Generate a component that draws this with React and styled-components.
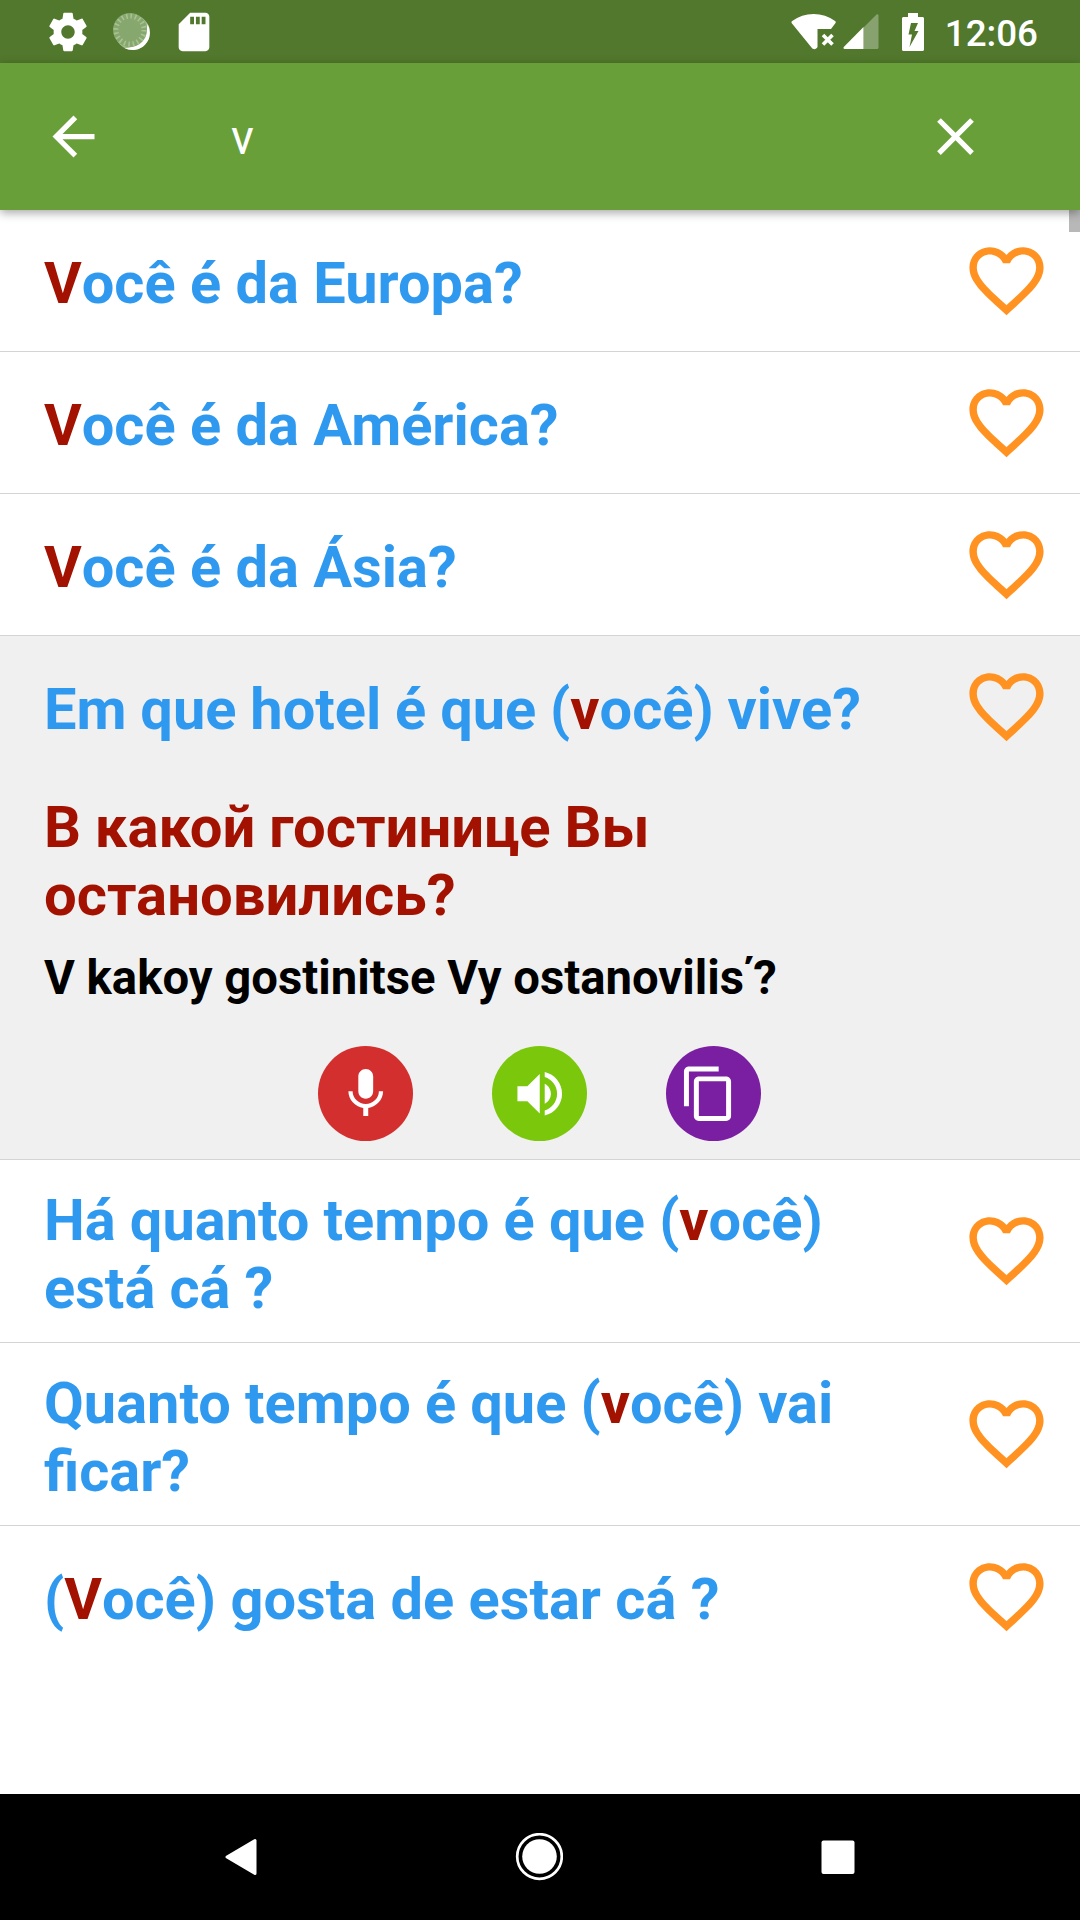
import React from "react";
import styled, { createGlobalStyle } from "styled-components";

const GlobalStyle = createGlobalStyle`
  * { box-sizing: border-box; }
  body { margin: 0; background: #fff; font-family: Roboto, "Noto Sans", sans-serif; }
  svg { display: block; flex: none; }
`;

const Screen = styled.div`
  width: 1080px;
  height: 1920px;
  display: flex;
  flex-direction: column;
  overflow: hidden;
  background: #fff;
`;

const StatusBar = styled.header`
  flex: none;
  height: 63px;
  display: flex;
  align-items: center;
  justify-content: space-between;
  padding: 0 42px 0 45px;
  background: #51782c;
  color: #fff;
`;

const StatusGroup = styled.div`
  display: flex;
  align-items: center;
  gap: ${(p) => p.$gap || 0}px;
`;

const BatteryWrap = styled.div`
  margin-left: 23px;
`;

const Clock = styled.span`
  margin-left: 21px;
  padding-top: 3px;
  font-size: 36.75px;
  line-height: 43px;
  font-weight: 500;
`;

const Toolbar = styled.div`
  flex: none;
  position: relative;
  z-index: 2;
  height: 147px;
  display: flex;
  align-items: center;
  padding: 0 93px 0 42px;
  background: #689f38;
  color: #fff;
  box-shadow: 0 3px 9px rgba(0, 0, 0, 0.34);
`;

const IconButton = styled.button`
  display: flex;
  padding: 0;
  border: 0;
  background: none;
  color: inherit;
`;

const HeartButton = styled(IconButton)`
  color: #ff9220;
`;

const SearchField = styled.div`
  flex: 1;
  padding: 3px 0 0 126px;
  font-size: 47.25px;
  line-height: 55px;
`;

const List = styled.main`
  flex: 1;
  position: relative;
`;

const ScrollThumb = styled.div`
  position: absolute;
  top: 0;
  right: 0;
  width: 11px;
  height: 22px;
  background: #b8b8b8;
`;

const Entry = styled.section`
  background: ${(p) => (p.$open ? "#f0f0f0" : "#fff")};
  border-bottom: ${(p) => (p.$last ? "0" : "1px solid #d4d4d4")};
`;

const EntryHead = styled.div`
  display: flex;
  align-items: center;
  justify-content: space-between;
  min-height: 141px;
  padding: 19.7px 29px 20.3px 44px;
`;

const Phrase = styled.div`
  width: 850px;
  padding-top: 6px;
  font-size: 57.75px;
  line-height: 68px;
  font-weight: 700;
  word-spacing: ${(p) => p.$wordSpacing || 0}px;
  color: #2f99f0;
`;

const Match = styled.span`
  display: inline-block;
  color: #a31200;
`;

const Details = styled.div`
  padding: 16px 44px 18px;
`;

const Translation = styled.div`
  font-size: 58px;
  line-height: 68px;
  font-weight: 700;
  word-spacing: -0.6px;
  color: #a31200;
`;

const Transcription = styled.div`
  margin-top: 22px;
  font-size: 47.25px;
  line-height: 55px;
  font-weight: 700;
  color: #000;
`;

const SoftMark = styled.span`
  margin: 0 -3px 0 -4px;
`;

const Actions = styled.div`
  display: flex;
  justify-content: center;
  gap: 79px;
  margin-top: 40px;
  padding-right: 1px;
`;

const RoundButton = styled.button`
  width: 95px;
  height: 95px;
  display: flex;
  align-items: center;
  justify-content: center;
  border: 0;
  padding: 0 ${(p) => p.$shift || 0}px 0 0;
  border-radius: 50%;
  background: ${(p) => p.$color};
  color: #fff;
`;

const NavBar = styled.nav`
  flex: none;
  height: 126px;
  display: flex;
  align-items: center;
  justify-content: center;
  gap: 250px;
  padding-right: 2px;
  background: #000;
  color: #fff;
`;

const Icon = ({ size, d }) => (
  <svg width={size} height={size} viewBox="0 0 24 24" fill="currentColor">
    <path d={d} />
  </svg>
);

const icons = {
  settings:
    "M19.43 12.98c.04-.32.07-.64.07-.98s-.03-.66-.07-.98l2.11-1.65c.19-.15.24-.42.12-.64l-2-3.46c-.12-.22-.39-.3-.61-.22l-2.49 1c-.52-.4-1.08-.73-1.69-.98l-.38-2.65C14.46 2.18 14.25 2 14 2h-4c-.25 0-.46.18-.49.42l-.38 2.65c-.61.25-1.17.59-1.69.98l-2.49-1c-.23-.09-.49 0-.61.22l-2 3.46c-.13.22-.07.49.12.64l2.11 1.65c-.04.32-.07.65-.07.98s.03.66.07.98l-2.11 1.65c-.19.15-.24.42-.12.64l2 3.46c.12.22.39.3.61.22l2.49-1c.52.4 1.08.73 1.69.98l.38 2.65c.03.24.24.42.49.42h4c.25 0 .46-.18.49-.42l.38-2.65c.61-.25 1.17-.59 1.69-.98l2.49 1c.23.09.49 0 .61-.22l2-3.46c.12-.22.07-.49-.12-.64l-2.11-1.65zM12 15.5c-1.93 0-3.5-1.57-3.5-3.5s1.57-3.5 3.5-3.5 3.5 1.57 3.5 3.5-1.57 3.5-3.5 3.5z",
  sdCard:
    "M18 2h-8L4.02 8 4 20c0 1.1.9 2 2 2h12c1.1 0 2-.9 2-2V4c0-1.1-.9-2-2-2zm-6 6h-2V4h2v4zm3 0h-2V4h2v4zm3 0h-2V4h2v4z",
  back: "M20 11H7.83l5.59-5.59L12 4l-8 8 8 8 1.41-1.41L7.83 13H20v-2z",
  close:
    "M19 6.41L17.59 5 12 10.59 6.41 5 5 6.41 10.59 12 5 17.59 6.41 19 12 13.41 17.59 19 19 17.59 13.41 12z",
  heart:
    "M16.5 3c-1.74 0-3.41.81-4.5 2.09C10.91 3.81 9.24 3 7.5 3 4.42 3 2 5.42 2 8.5c0 3.78 3.4 6.86 8.55 11.54L12 21.35l1.45-1.32C18.6 15.36 22 12.28 22 8.5 22 5.42 19.58 3 16.5 3zm-4.4 15.55l-.1.1-.1-.1C7.14 14.24 4 11.39 4 8.5 4 6.5 5.5 5 7.5 5c1.54 0 3.04.99 3.57 2.36h1.87C13.46 5.99 14.96 5 16.5 5c2 0 3.5 1.5 3.5 3.5 0 2.89-3.14 5.74-7.9 10.05z",
  mic: "M12 14c1.66 0 2.99-1.34 2.99-3L15 5c0-1.66-1.34-3-3-3S9 3.34 9 5v6c0 1.66 1.34 3 3 3zm5.3-3c0 3-2.54 5.1-5.3 5.1S6.7 14 6.7 11H5c0 3.41 2.72 6.23 6 6.72V21h2v-3.28c3.28-.48 6-3.3 6-6.72h-1.7z",
  copy: "M16 1H4c-1.1 0-2 .9-2 2v14h2V3h12V1zm3 4H8c-1.1 0-2 .9-2 2v14c0 1.1.9 2 2 2h11c1.1 0 2-.9 2-2V7c0-1.1-.9-2-2-2zm0 16H8V7h11v14z",
  volume:
    "M3 9v6h4l5 5V4L7 9H3zm13.5 3c0-1.77-1.02-3.29-2.5-4.03v8.05c1.48-.73 2.5-2.25 2.5-4.02zM14 3.23v2.06c2.89.86 5 3.54 5 6.71s-2.11 5.85-5 6.71v2.06c4.01-.91 7-4.49 7-8.77s-2.99-7.86-7-8.77z",
};

const SpinnerIcon = () => (
  <svg width="39" height="39" viewBox="0 0 39 39">
    <circle cx="20.5" cy="20.5" r="17.5" fill="#a4bd8f" />
    <path d="M35.5 12a17.3 17.3 0 0 1-23 24C24 36 34 29 35.5 12z" fill="#fff" />
    <circle cx="18" cy="18" r="17" fill="#86a76d" />
    <circle cx="18" cy="18" r="14" fill="none" stroke="#a9c292" strokeWidth="5" strokeDasharray="1.6 2.8" />
  </svg>
);

const WifiIcon = () => (
  <svg width="46" height="38" viewBox="0 0 46 38" fill="#fff">
    <path d="M.8 10.2C.2 9.4.4 8.7 1.2 8.1A36 36 0 0 1 22.5 1a36 36 0 0 1 21.6 7.1c.8.6.9 1.3.4 2l-4.5 6H26.5v18c-1.4 2.4-4 2.8-5.8.6z" />
    <path d="M32 22l9.5 9.5M41.5 22L32 31.5" stroke="#fff" strokeWidth="3.6" />
  </svg>
);

const SignalIcon = () => (
  <svg width="36" height="38" viewBox="0 0 36 38">
    <path d="M20.5 14.5L33.5 1.6c.8-.8 2-.4 2 .8V34.5c0 .9-.6 1.5-1.5 1.5H20.5z" fill="#87a26e" />
    <path d="M20.5 14v22H1.8C.4 36 0 34.8 1 33.7z" fill="#fff" />
  </svg>
);

const BatteryIcon = () => (
  <svg width="22" height="38" viewBox="0 0 22 38" fill="#fff">
    <path
      fillRule="evenodd"
      d="M6 0h10v4h4.5c.9 0 1.5.6 1.5 1.5v31c0 .9-.6 1.5-1.5 1.5h-19C.6 38 0 37.4 0 36.5v-31C0 4.6.6 4 1.5 4H6zM9 10L6.5 21.500H10L7.5 34 16.5 18H12.5L16 10z"
    />
  </svg>
);

const entries = [
  { parts: ["", "V", "ocê é da Europa?"] },
  { parts: ["", "V", "ocê é da América?"] },
  { parts: ["", "V", "ocê é da Ásia?"] },
  {
    parts: ["Em que hotel é que (", "v", "ocê) vive?"],
    wordSpacing: -0.5,
    translation: "В какой гостинице Вы остановились?",
    transcription: ["V kakoy gostinitse Vy ostanovilis", "΄", "?"],
  },
  { parts: ["Há quanto tempo é que (", "v", "ocê) está cá ?"], wordSpacing: -0.2 },
  { parts: ["Quanto tempo é que (", "v", "ocê) vai ficar?"], wordSpacing: -0.2 },
  { parts: ["(", "V", "ocê) gosta de estar cá ?"] },
];

function PhraseEntry({ entry, last }) {
  const [before, match, after] = entry.parts;
  return (
    <Entry $open={Boolean(entry.translation)} $last={last}>
      <EntryHead>
        <Phrase $wordSpacing={entry.wordSpacing}>
          {before}
          <Match>{match}</Match>
          {after}
        </Phrase>
        <HeartButton aria-label="Favorito">
          <Icon size={89} d={icons.heart} />
        </HeartButton>
      </EntryHead>
      {entry.translation && (
        <Details>
          <Translation>{entry.translation}</Translation>
          <Transcription>
            {entry.transcription[0]}
            <SoftMark>{entry.transcription[1]}</SoftMark>
            {entry.transcription[2]}
          </Transcription>
          <Actions>
            <RoundButton $color="#d32f2f">
              <Icon size={59.5} d={icons.mic} />
            </RoundButton>
            <RoundButton $color="#7ac70c">
              <Icon size={59.5} d={icons.volume} />
            </RoundButton>
            <RoundButton $color="#7b1fa2" $shift={10}>
              <Icon size={59.5} d={icons.copy} />
            </RoundButton>
          </Actions>
        </Details>
      )}
    </Entry>
  );
}

export default function App() {
  return (
    <Screen>
      <GlobalStyle />
      <StatusBar>
        <StatusGroup $gap={20.5}>
          <Icon size={46} d={icons.settings} />
          <SpinnerIcon />
          <Icon size={46} d={icons.sdCard} />
        </StatusGroup>
        <StatusGroup>
          <StatusGroup $gap={6}>
            <WifiIcon />
            <SignalIcon />
          </StatusGroup>
          <BatteryWrap>
            <BatteryIcon />
          </BatteryWrap>
          <Clock>12:06</Clock>
        </StatusGroup>
      </StatusBar>
      <Toolbar>
        <IconButton aria-label="Voltar">
          <Icon size={63} d={icons.back} />
        </IconButton>
        <SearchField>v</SearchField>
        <IconButton aria-label="Limpar">
          <Icon size={63} d={icons.close} />
        </IconButton>
      </Toolbar>
      <List>
        {entries.map((entry, i) => (
          <PhraseEntry key={i} entry={entry} last={i === entries.length - 1} />
        ))}
        <ScrollThumb />
      </List>
      <NavBar>
        <svg width="48" height="48" viewBox="0 0 48 48">
          <path d="M10 24L38 7.5V40.5z" fill="#fff" stroke="#fff" strokeWidth="3" strokeLinejoin="round" />
        </svg>
        <svg width="48" height="48" viewBox="0 0 48 48">
          <circle cx="24.5" cy="23.5" r="22.3" fill="none" stroke="#fff" strokeWidth="2.7" />
          <circle cx="24.5" cy="23.5" r="17.3" fill="#fff" />
        </svg>
        <svg width="48" height="48" viewBox="0 0 48 48">
          <rect x="8.5" y="7.5" width="33" height="33.5" rx="2" fill="#fff" />
        </svg>
      </NavBar>
    </Screen>
  );
}
